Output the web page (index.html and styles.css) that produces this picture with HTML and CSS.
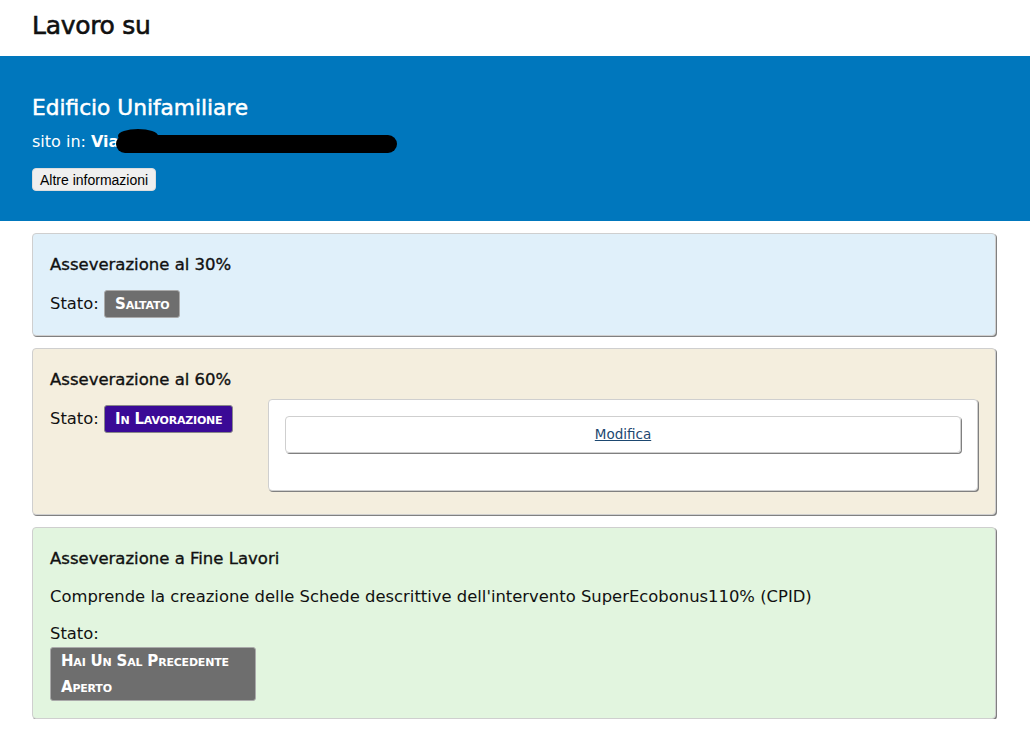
FILE: index.html
```html
<!DOCTYPE html>
<html lang="it">
<head>
    <meta charset="UTF-8">
    <meta name="viewport" content="width=device-width, initial-scale=1.0">
    <title>Lavoro su</title>
    <link rel="stylesheet" href="styles.css">
</head>
<body>
    <h1 class="page-title">Lavoro su</h1>
    <div class="building">
        <h2>Edificio Unifamiliare</h2>
        <p class="address">sito in: <strong>Via</strong><span class="redacted"></span></p>
        <button class="info-btn">Altre informazioni</button>
    </div>
    <div class="steps">
        <div class="step step-30">
            <h3>Asseverazione al 30%</h3>
            <div class="step-body">
                <div class="status">Stato: <span class="badge badge-skip">Saltato</span></div>
            </div>
        </div>
        <div class="step step-60">
            <h3>Asseverazione al 60%</h3>
            <div class="step-body">
                <div class="status">Stato: <span class="badge badge-work">In Lavorazione</span></div>
                <div class="actions">
                    <div class="action"><a href="#">Modifica</a></div>
                </div>
            </div>
        </div>
        <div class="step step-end">
            <h3>Asseverazione a Fine Lavori</h3>
            <p class="desc">Comprende la creazione delle Schede descrittive dell'intervento SuperEcobonus110% (CPID)</p>
            <div class="step-body">
                <div class="status">Stato: <span class="badge badge-skip">Hai Un Sal Precedente Aperto</span></div>
            </div>
        </div>
    </div>
</body>
</html>
```

FILE: styles.css
```css
body {
    margin: 0;
    font-family: "DejaVu Sans", Verdana, sans-serif;
    color: #111;
    background: #fff;
}
.page-title {
    margin: 0;
    padding: 11px 32px 0;
    height: 45px;
    font-size: 25px;
    font-weight: normal;
    letter-spacing: -0.3px;
    -webkit-text-stroke: 0.6px #111;
}
.building {
    background: #0077bd;
    color: #fff;
    padding: 39px 32px 30px;
}
.building h2 {
    margin: 0;
    font-size: 21.7px;
    font-weight: normal;
    -webkit-text-stroke: 0.5px #fff;
}
.address {
    margin: 12px 0 15px;
    font-size: 16px;
    line-height: 20px;
}
.redacted {
    position: relative;
    display: inline-block;
    vertical-align: -6px;
    width: 281px;
    height: 18px;
    background: #000;
    border-radius: 10px;
    margin-left: -3px;
}
.redacted::before {
    content: "";
    position: absolute;
    left: 2px;
    top: -6px;
    width: 40px;
    height: 14px;
    background: #000;
    border-radius: 50%;
}
.info-btn {
    font-family: "Liberation Sans", Arial, sans-serif;
    font-size: 14px;
    padding: 3px 7px 2px;
    background: #efefef;
    border: 1px solid #ddd;
    border-radius: 4px;
    color: #000;
}
.steps {
    display: flex;
    flex-direction: column;
    gap: 12px;
    padding: 12px 32px 0 32px;
    width: 964px;
}
.step {
    border: 1px solid #cfcfcf;
    border-radius: 4px;
    box-shadow: 1px 1px 0 #808080;
    padding: 21px 17px 17px;
}
.step-30 { background: #e0f0fa; }
.step-60 { background: #f4eede; }
.step-end { background: #e2f5df; }
.step h3 {
    margin: 0 0 16px;
    font-size: 16.5px;
    font-weight: normal;
    -webkit-text-stroke: 0.35px #111;
}
.desc {
    margin: 19px 0 15px;
    font-size: 16.4px;
}
.step-body {
    display: flex;
    gap: 12px;
}
.status {
    width: 206px;
    flex-shrink: 0;
    font-size: 16.4px;
    line-height: 26px;
}
.badge {
    display: inline-block;
    color: #fff;
    font-variant: small-caps;
    font-weight: bold;
    font-size: 15px;
    letter-spacing: -0.2px;
    line-height: 26px;
    padding: 0 10px;
    border-radius: 3px;
    border: 1px solid #aaa;
}
.badge-skip { background: #6e6e6e; }
.badge-work { background: #3a0a96; border-color: #888; }
.step-end .badge {
    width: 184px;
}
.actions {
    flex: 1;
    background: #fff;
    border: 1px solid #cfcfcf;
    border-radius: 4px;
    box-shadow: 1px 1px 0 #808080;
    padding: 16px 16px 37px;
    margin: -6px 0 6px;
}
.action {
    border: 1px solid #cfcfcf;
    border-radius: 4px;
    box-shadow: 1px 1px 0 #808080;
    text-align: center;
    padding: 7px 0 9px;
}
.action a {
    color: #1d4870;
    font-size: 13.5px;
}
```
